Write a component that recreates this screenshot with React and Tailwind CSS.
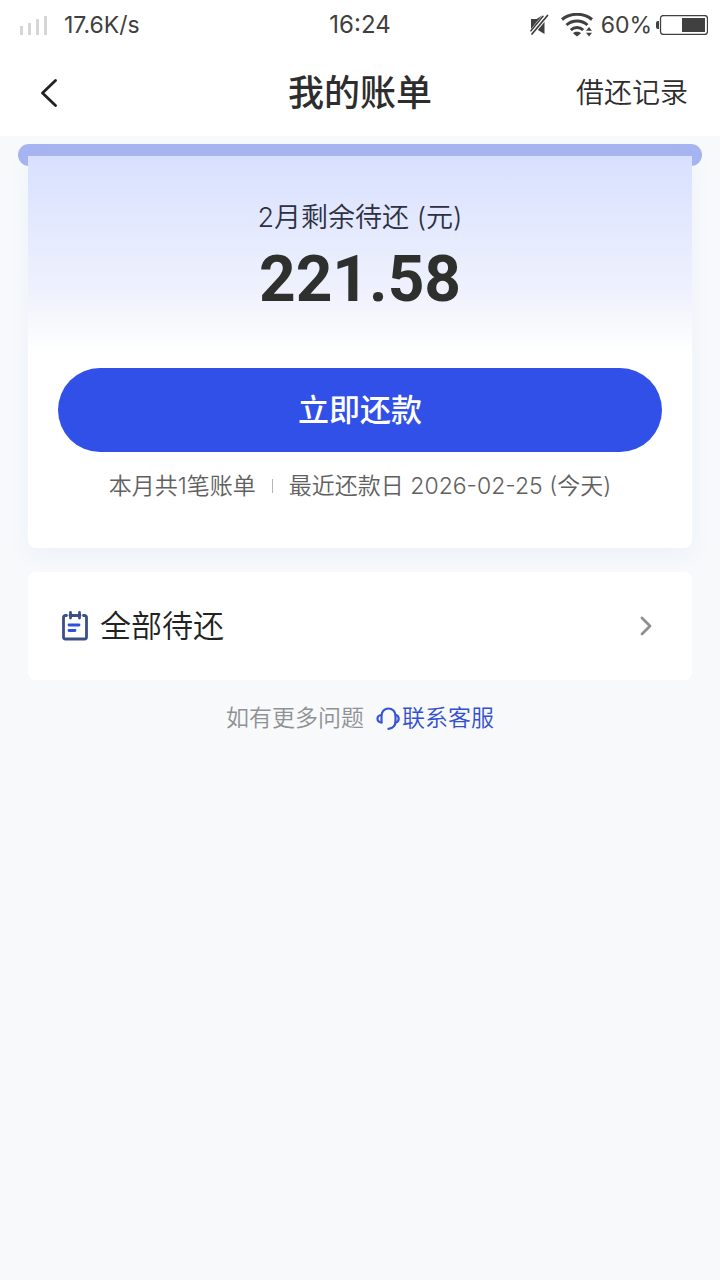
import React from 'react';

const SignalIcon = () => (
  <svg width="28" height="20" viewBox="0 0 28 20" fill="#d6d6d6" aria-hidden="true">
    <rect x="0" y="11" width="3" height="9" />
    <rect x="8" y="8" width="3" height="12" />
    <rect x="16" y="4" width="3" height="16" />
    <rect x="24" y="1" width="3" height="19" />
  </svg>
);

const MuteIcon = () => (
  <svg width="20" height="22" viewBox="0 0 20 22" fill="#404040" aria-hidden="true">
    <path d="M2 5h5.500L13 1.500 2 15z" />
    <path d="M15.500 6v14L8 15.500z" />
    <path d="M2 16.800 14 2.300" stroke="#404040" strokeWidth="1.600" strokeLinecap="round" />
    <path d="M3 20 18.500 1.500" stroke="#fff" strokeWidth="3.600" />
    <path d="M3 20 18.500 1.500" stroke="#404040" strokeWidth="1.800" strokeLinecap="round" />
  </svg>
);

const WifiIcon = () => (
  <svg width="32" height="24" viewBox="0 0 32 24" fill="none" stroke="#404040" aria-hidden="true">
    <path d="M1 6.500C9.500-.5 22.500-.5 31 6.500" strokeWidth="3" />
    <path d="M5.500 12c6-5.300 15-5.300 21 0" strokeWidth="3" />
    <path d="M9.800 17c3.600-3.300 8.800-3.300 12.400 0" strokeWidth="3" />
    <path d="m16 23.500-4-3.300c2.300-1.900 5.700-1.900 8 0z" fill="#404040" stroke="none" />
    <path d="m28 14 3 3.700h-6zM28 23.500l3-3.700h-6z" fill="#404040" stroke="none" />
  </svg>
);

const BatteryIcon = () => (
  <svg width="52" height="20" viewBox="0 0 52 20" aria-hidden="true">
    <path d="M3 6H2a2 2 0 0 0-2 2v4a2 2 0 0 0 2 2h1z" fill="#404040" />
    <rect x="4.500" y=".5" width="47" height="19" rx="3" fill="none" stroke="#404040" strokeWidth="1.300" />
    <rect x="26" y="3" width="23" height="14" fill="#404040" />
  </svg>
);

const BackIcon = () => (
  <svg width="18" height="28" viewBox="0 0 18 28" fill="none" stroke="#222" strokeWidth="2.800" strokeLinecap="round" strokeLinejoin="round" aria-hidden="true">
    <path d="M15.500 1.500 2.500 14l13 12.500" />
  </svg>
);

const BillIcon = () => (
  <svg width="26" height="30" viewBox="0 0 26 30" fill="none" strokeLinecap="round" strokeLinejoin="round" aria-hidden="true">
    <path d="M8 4.500h10M4.500 4.500H3.500a2 2 0 0 0-2 2V26a2 2 0 0 0 2 2h19a2 2 0 0 0 2-2V6.500a2 2 0 0 0-2-2h-1" stroke="#3d4f86" strokeWidth="2.800" />
    <path d="M8.500 1.500v5.500M17.500 1.500v5.500" stroke="#3d4f86" strokeWidth="2.800" />
    <path d="M7 14h10M7 19.500h6" stroke="#2f50d8" strokeWidth="2.800" />
  </svg>
);

const ArrowIcon = () => (
  <svg width="12" height="20" viewBox="0 0 12 20" fill="none" stroke="#8f8f8f" strokeWidth="2.800" strokeLinecap="round" strokeLinejoin="round" aria-hidden="true">
    <path d="m2 2 8 8-8 8" />
  </svg>
);

const HeadsetIcon = () => (
  <svg width="24" height="24" viewBox="0 0 24 24" fill="none" stroke="#3a55cf" strokeWidth="2.200" strokeLinecap="round" strokeLinejoin="round" aria-hidden="true">
    <path d="M5.500 16.500V9.500a7 7 0 0 1 14 0V15c0 4.500-2.500 7.300-7 7.800" />
    <path d="M5.500 9C3 9.200 1.500 10.700 1.500 12.700s1.500 3.500 4 3.800" />
    <path d="M19.500 8.700c2.200.600 3.200 2.200 3.200 4s-1 3.400-3.200 4" />
  </svg>
);

const StatusBar = () => (
  <div className="grid grid-cols-3 items-center h-[50px] px-3 bg-white text-[#404040] text-[23px]">
    <div className="flex items-center gap-4 pl-2">
      <SignalIcon />
      <span>17.6K/s</span>
    </div>
    <span className="text-center text-[24px]">16:24</span>
    <div className="flex items-center justify-end gap-1">
      <div className="flex items-center gap-3 pr-1">
        <MuteIcon />
        <WifiIcon />
      </div>
      <span>60%</span>
      <BatteryIcon />
    </div>
  </div>
);

const BillCard = () => (
  <section className="px-[18px] pt-2">
    {/* Slot that the bill slides out of */}
    <div className="h-[22px] rounded-full bg-[#a6b5f1]" />
    <div className="relative -mt-[10px] mx-[10px] px-[30px] pt-11 pb-11 rounded-b-lg bg-white bg-linear-to-b from-[#d8e0fe] via-[#eff2fd] via-35% to-white to-50% shadow-[0_6px_20px_rgba(110,150,220,0.08)] text-center">
      <h2 className="text-[27px] leading-9 font-[350] text-[#2e3040]">2月剩余待还 (元)</h2>
      <p className="mt-1 text-[64px] leading-[80px] font-bold text-[#2e302d] font-['Roboto',sans-serif]">
        221.58
      </p>
      <button type="button" className="mt-12 w-full h-[84px] rounded-full bg-[#3050e8] text-white text-[31px] font-medium">
        立即还款
      </button>
      <div className="flex items-center justify-center gap-4 mt-4 h-9 text-[23px] font-[350] text-[#606060]">
        <span>本月共1笔账单</span>
        <span className="w-px h-[14px] bg-[#b5b5b5]" />
        <span>最近还款日 2026-02-25 (今天)</span>
      </div>
    </div>
  </section>
);

const App = () => {
  return (
    <div className="min-h-screen bg-[#f7f9fb] font-['Inter','Noto_Sans_CJK_SC',sans-serif]">
      <StatusBar />
      <header className="grid grid-cols-3 items-center h-[86px] px-8 bg-white text-[#2d2d2d]">
        <button type="button" aria-label="返回" className="justify-self-start p-2">
          <BackIcon />
        </button>
        <h1 className="text-center text-[36px] font-medium">我的账单</h1>
        <a href="#records" className="justify-self-end text-[28px] font-[350]">借还记录</a>
      </header>

      <main>
        <BillCard />

        <a href="#pending" className="flex items-center h-[108px] mx-7 mt-6 pl-[34px] pr-10 rounded-lg bg-white">
          <BillIcon />
          <span className="ml-3 text-[31px] font-[350] text-[#222]">全部待还</span>
          <span className="ml-auto">
            <ArrowIcon />
          </span>
        </a>

        <footer className="flex items-center justify-center gap-3 mt-5 text-[23px] leading-9 font-[350] text-[#8f9193]">
          <span>如有更多问题</span>
          <a href="#service" className="flex items-center gap-[2px] text-[#3450d0]">
            <HeadsetIcon />
            联系客服
          </a>
        </footer>
      </main>
    </div>
  );
};

export default App;
